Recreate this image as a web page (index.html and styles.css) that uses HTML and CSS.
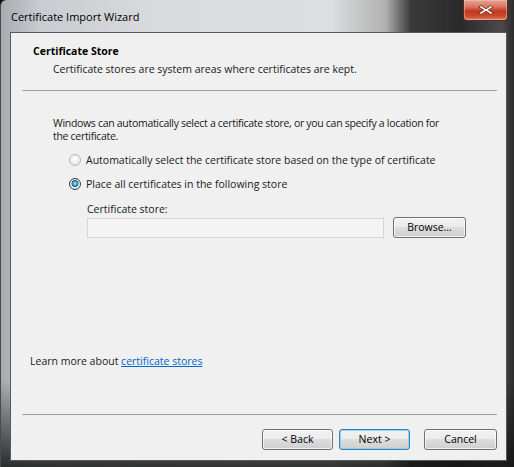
FILE: index.html
```html
<!DOCTYPE html>
<html>
<head>
<meta charset="utf-8">
<link rel="stylesheet" href="styles.css">
</head>
<body>
<div class="window">
  <div class="titlebar">
    <span class="title">Certificate Import Wizard</span>
    <div class="close">
      <svg width="18" height="12" viewBox="0 0 18 12">
        <path d="M4 1.5 L9 4.8 L14 1.5 L16.2 3 L11.3 6 L16.2 9 L14 10.5 L9 7.2 L4 10.5 L1.8 9 L6.7 6 L1.8 3 Z" fill="#ffffff" stroke="#5a2318" stroke-width="0.8" stroke-linejoin="round"/>
      </svg>
    </div>
  </div>
  <div class="client">
    <div class="header">
      <div class="h-title">Certificate Store</div>
      <div class="h-sub">Certificate stores are system areas where certificates are kept.</div>
    </div>
    <div class="sep"></div>
    <div class="body">
      <p class="intro">Windows can automatically select a certificate store, or you can specify a location for<br>the certificate.</p>
      <div class="radio-row first">
        <span class="radio"></span>
        <span>Automatically select the certificate store based on the type of certificate</span>
      </div>
      <div class="radio-row">
        <span class="radio checked"></span>
        <span>Place all certificates in the following store</span>
      </div>
      <div class="store">
        <div class="store-label">Certificate store:</div>
        <div class="store-row">
          <div class="input"></div>
          <div class="btn browse">Browse...</div>
        </div>
      </div>
      <div class="learn">Learn more about <a class="link">certificate stores</a></div>
    </div>
    <div class="sep bottom"></div>
    <div class="footer">
      <div class="btn">&lt; Back</div>
      <div class="btn default">Next &gt;</div>
      <div class="btn cancel">Cancel</div>
    </div>
  </div>
</div>
</body>
</html>
```
FILE: styles.css
```css
html, body {
  margin: 0;
  padding: 0;
}
body {
  width: 514px;
  height: 467px;
  overflow: hidden;
  background: #101010;
  font-family: "Open Sans", "Noto Sans", sans-serif;
  font-size: 10.5px;
  color: #1a1a1a;
}
.window {
  box-sizing: border-box;
  width: 514px;
  height: 467px;
  padding: 0 6px 0 9px;
  border-left: 1px solid #4a4a4a;
  border-top-left-radius: 6px;
  background:
    linear-gradient(to bottom, rgba(0,0,0,0) 0px, rgba(0,0,0,0) 380px, rgba(20,20,20,0.85) 467px),
    linear-gradient(to right, #a7acb1 0px, #c9ccd0 40px, #d8dadc 150px, #dcdedf 330px, #b0b0b0 385px, #3a3a3a 410px, #2a2a2a 460px, #4a4a4a 500px, #2a2a2a 514px);
  display: flex;
  flex-direction: column;
}
.titlebar {
  height: 32px;
  display: flex;
  align-items: flex-start;
  justify-content: space-between;
  flex-shrink: 0;
}
.title {
  margin-top: 10px;
  margin-left: 1px;
  font-size: 11px;
  line-height: 14px;
  color: #000;
}
.close {
  width: 45px;
  height: 21px;
  box-sizing: border-box;
  border: 1px solid #5b2a22;
  border-top: none;
  border-radius: 0 0 4px 4px;
  background: linear-gradient(to bottom, #e8a493 0%, #d7735e 35%, #c2381c 55%, #c74a2f 80%, #d9826a 100%);
  box-shadow: inset 0 0 0 1px rgba(255,200,190,0.45);
  display: flex;
  align-items: center;
  justify-content: center;
}
.client {
  box-sizing: border-box;
  width: 497px;
  height: 429px;
  border: 1px solid #555a5f;
  background: #f0f0f0;
  display: flex;
  flex-direction: column;
  flex-shrink: 0;
}
.header {
  padding: 12px 0 0 22px;
  height: 46px;
  box-sizing: border-box;
}
.h-title {
  font-weight: bold;
  line-height: 13px;
  color: #000;
}
.h-sub {
  margin-top: 5px;
  margin-left: 20px;
  line-height: 13px;
  color: #1a1a1a;
}
.sep {
  height: 0;
  border-top: 1px solid #a0a0a0;
  margin: 11px 9px 0 11px;
}
.body {
  flex: 1;
  display: flex;
  flex-direction: column;
  padding-left: 42px;
}
.intro {
  margin: 26px 0 0 0;
  line-height: 13px;
  letter-spacing: -0.3px;
}
.radio-row {
  display: flex;
  align-items: center;
  gap: 5px;
  height: 16px;
  margin-left: 16px;
  margin-top: 8px;
  line-height: 13px;
}
.radio-row.first {
  margin-top: 9px;
}
.radio {
  box-sizing: border-box;
  width: 12px;
  height: 12px;
  border-radius: 50%;
  border: 1px solid #b8b8b8;
  background: radial-gradient(circle at 50% 40%, #ffffff 0%, #ececec 60%, #d8d8d8 100%);
  flex-shrink: 0;
}
.radio.checked {
  border-color: #3a3a3a;
  background: radial-gradient(circle at 50% 45%, #bfe6f7 0px, #3fa2d1 2px, #1f5f8c 3.2px, #eef2f4 3.8px, #dfe3e6 6px);
}
.store {
  margin-left: 34px;
  margin-top: 11px;
}
.store-label {
  line-height: 13px;
}
.store-row {
  display: flex;
  align-items: center;
  margin-top: 1px;
  gap: 9px;
}
.input {
  box-sizing: border-box;
  width: 297px;
  height: 20px;
  border: 1px solid #d6d6d6;
  background: #f4f4f4;
}
.btn {
  box-sizing: border-box;
  width: 71px;
  height: 21px;
  border: 1px solid #707070;
  border-radius: 3px;
  background: linear-gradient(to bottom, #f2f2f2 0%, #ebebeb 49%, #dddddd 50%, #cfcfcf 100%);
  box-shadow: inset 0 0 0 1px rgba(255,255,255,0.7);
  display: flex;
  align-items: center;
  justify-content: center;
  color: #000;
  line-height: 13px;
}
.btn.browse {
  width: 73px;
}
.btn.cancel {
  width: 73px;
  margin-left: 14px;
}
.btn.default {
  border-color: #3c7fb1;
  box-shadow: inset 0 0 0 1px #8fd3f2;
  margin-left: 6px;
}
.learn {
  margin-top: auto;
  margin-bottom: 46px;
  margin-left: -23px;
  line-height: 13px;
}
.link {
  color: #0066cc;
  text-decoration: underline;
}
.sep.bottom {
  margin-top: 0;
}
.footer {
  height: 45px;
  display: flex;
  justify-content: flex-end;
  align-items: flex-start;
  padding: 14px 9px 0 0;
  box-sizing: border-box;
}
```
